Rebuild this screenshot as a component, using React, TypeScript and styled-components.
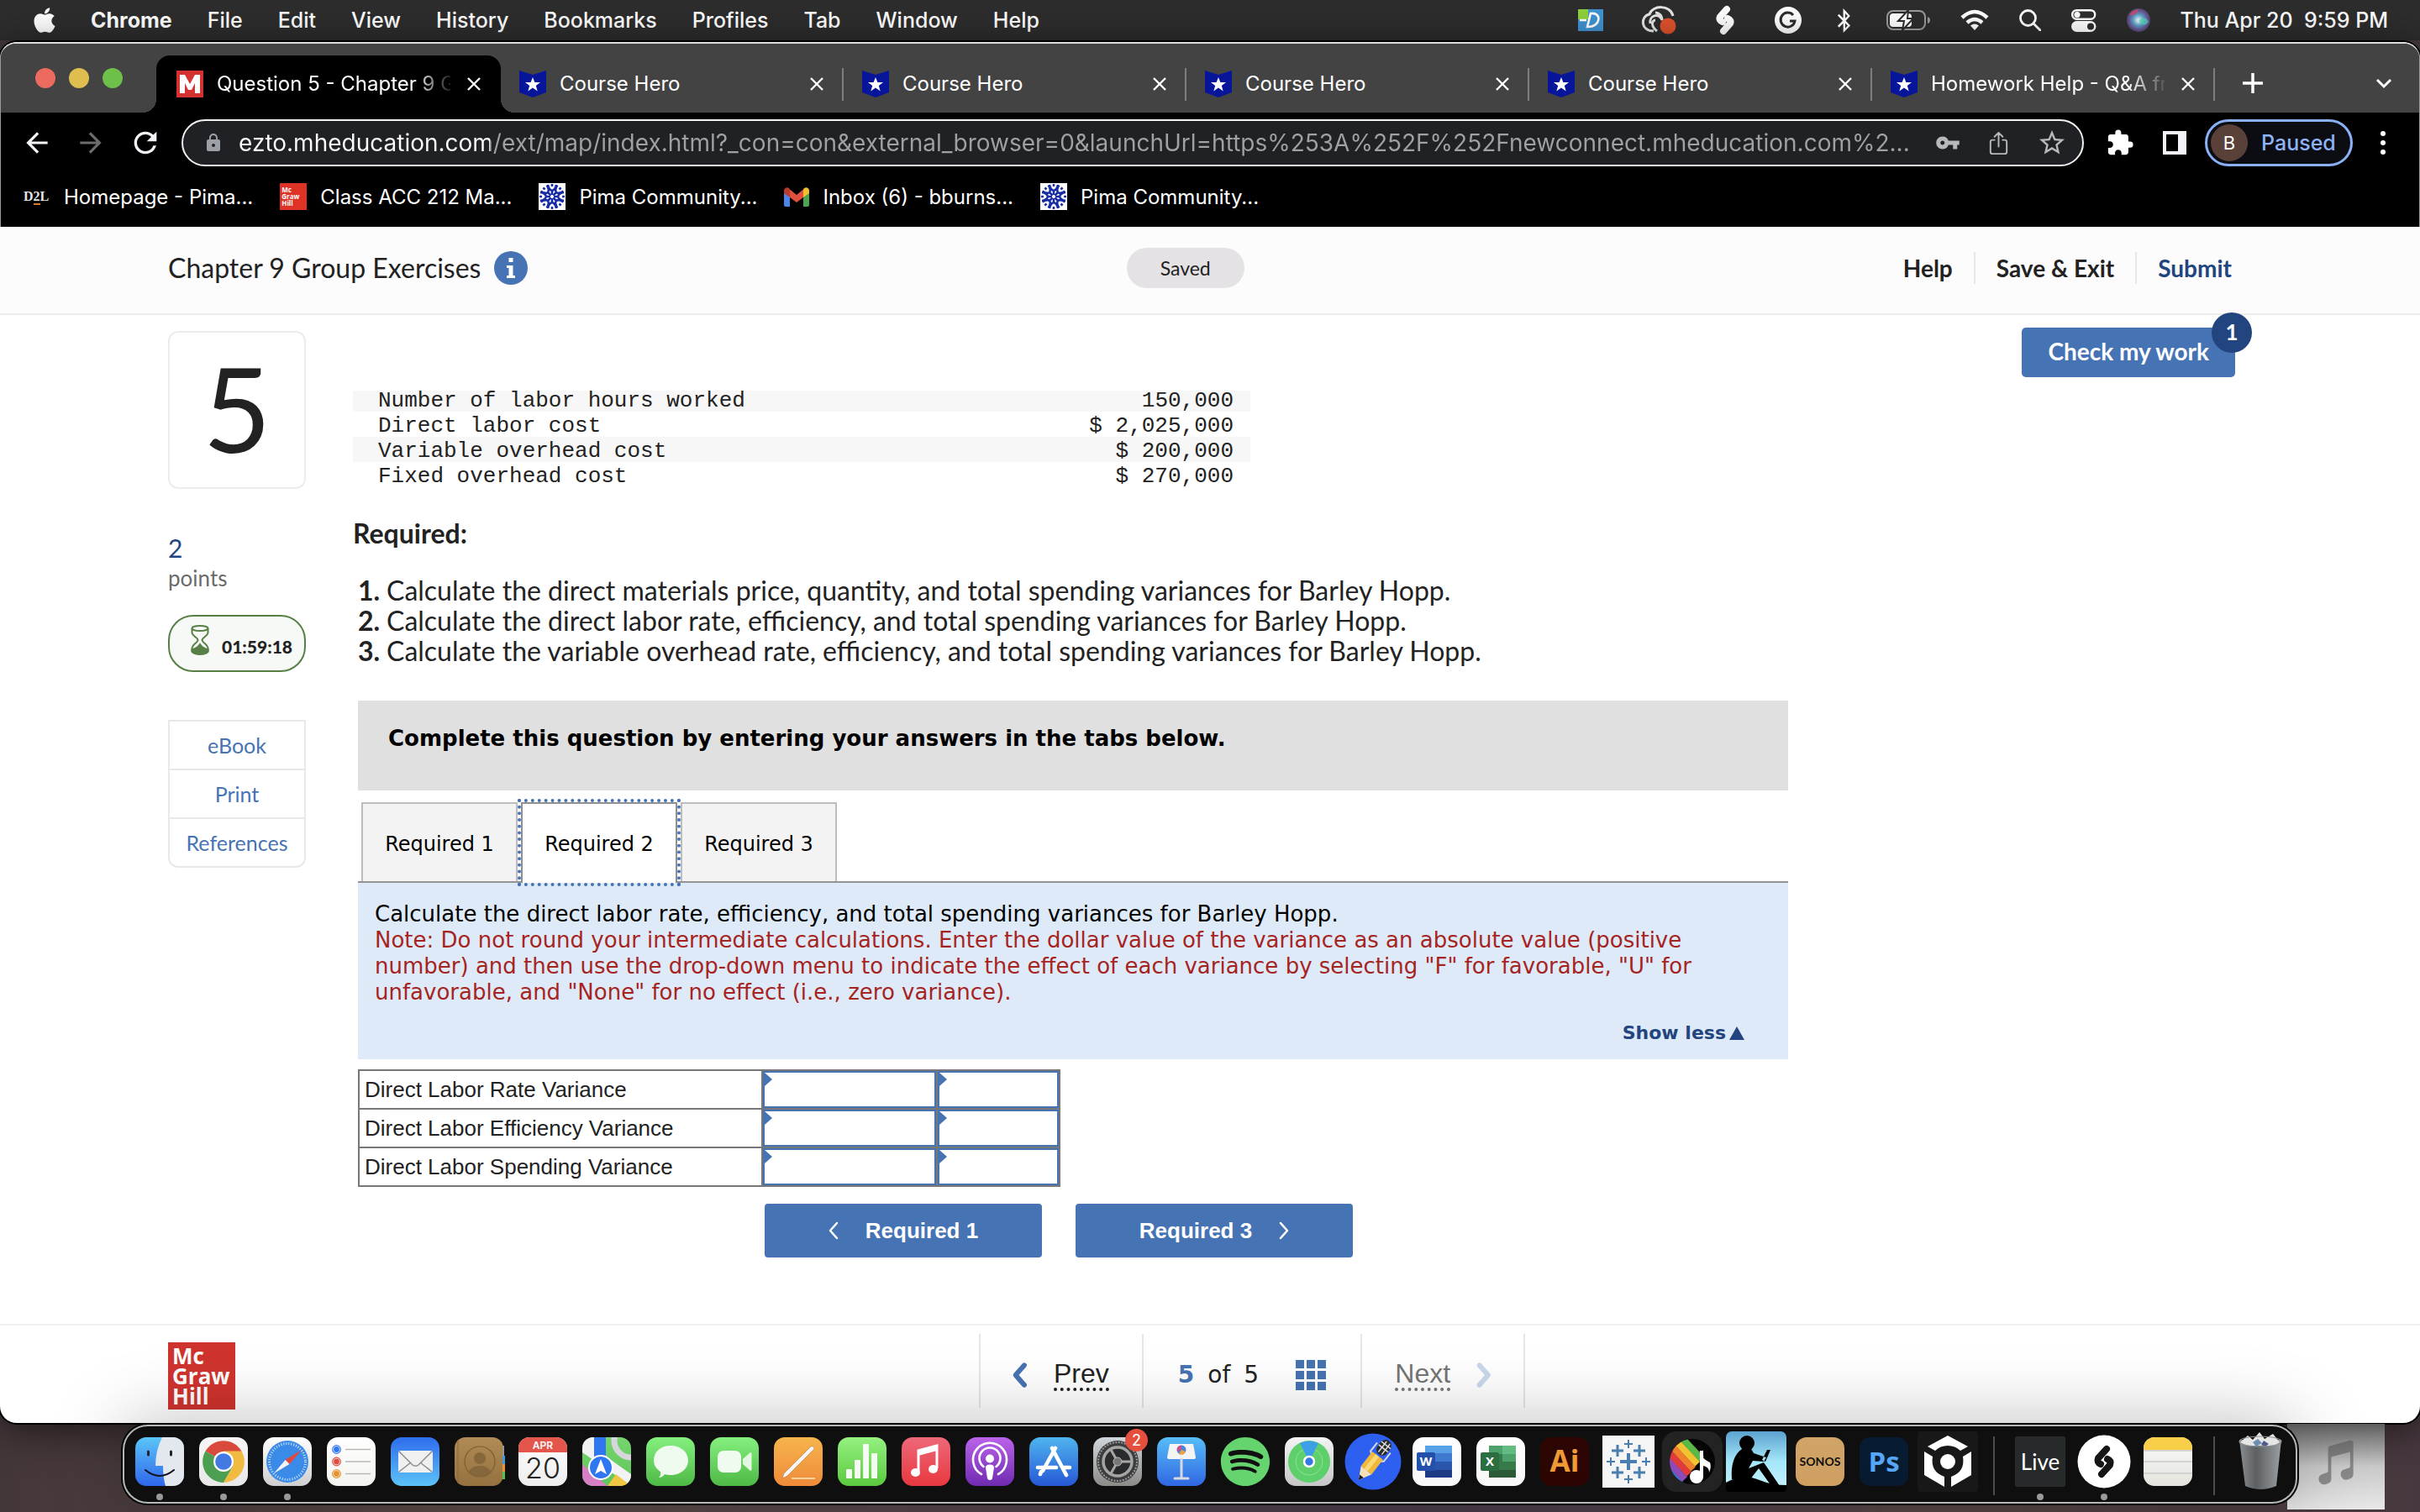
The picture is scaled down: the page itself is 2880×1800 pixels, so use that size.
import React from 'react';
import styled, { createGlobalStyle, css } from 'styled-components';
import { FaApple, FaBluetoothB, FaSpotify } from 'react-icons/fa';
import { MdArrowBack, MdArrowForward, MdRefresh, MdLock, MdVpnKey, MdStarBorder, MdExtension } from 'react-icons/md';
import { IoShareOutline, IoMusicalNotes } from 'react-icons/io5';

const ui = `Inter, "Liberation Sans", sans-serif`;
const brand = `Lato, "Open Sans", sans-serif`;
const verdana = `"DejaVu Sans", sans-serif`;
const arial = `"Liberation Sans", Arial, sans-serif`;
const blue = '#4673b3';
const navy = '#23457f';
const ink = '#222222';

const GlobalStyle = createGlobalStyle`
  *, *::before, *::after { box-sizing: border-box; }
  body { margin: 0; background: #44373a; }
  button { font: inherit; color: inherit; background: none; border: 0; padding: 0; margin: 0; cursor: pointer; }
  a { color: inherit; text-decoration: none; }
  svg { display: block; flex: none; }
`;

const Desktop = styled.div`
  position: relative;
  min-height: 100vh;
  display: flex;
  flex-direction: column;
  overflow: hidden;
  background: linear-gradient(90deg, #44373a 0%, #5d4b48 20%, #4a3d4c 60%, #584745 80%, #47383f 100%);
`;

/* ---------- system menu bar ---------- */

const MenuBar = styled.header`
  display: flex;
  justify-content: space-between;
  align-items: center;
  height: 48px;
  padding: 0 38px 0 40px;
  background: #2d2d2d;
  color: #fff;
  font: 400 25px/48px ${ui};
`;

const AppleMark = styled(FaApple)`
  width: 26px;
  height: 34px;
`;

const MenuList = styled.nav`
  display: flex;
  align-items: center;
  gap: 42px;
`;

const MenuItem = styled.button<{ $strong?: boolean }>`
  font-weight: ${(p) => (p.$strong ? 700 : 500)};
`;

const StatusList = styled.div`
  display: flex;
  align-items: center;
  gap: 36px;
`;

const StatusExtras = styled.div`
  display: flex;
  align-items: center;
  gap: 46px;
`;

const Clock = styled.time`
  white-space: pre;
  font-weight: 500;
`;

/* ---------- browser window ---------- */

const BrowserWindow = styled.div`
  flex: 1;
  display: flex;
  flex-direction: column;
  margin: 2px 0;
  border-radius: 20px;
  background: #fff;
  box-shadow: 0 0 0 2px #000, 0 8px 50px rgba(0, 0, 0, 0.6);
  overflow: hidden;
`;

const BrowserChrome = styled.div`
  background: #000;
  border: 1px solid #9a9a9a;
  border-top: 2px solid #dcdcdc;
  border-bottom: 0;
  border-radius: 20px 20px 0 0;
  color: #fff;
  height: 220px;
  font-family: ${ui};
`;

const TabStrip = styled.div`
  display: flex;
  height: 82px;
  padding-left: 41px;
  background: #434343;
  border-radius: 18px 18px 0 0;
`;

const Lights = styled.div`
  display: flex;
  gap: 16px;
  padding-top: 29px;
  width: 144px;
`;

const Light = styled.button<{ $color: string }>`
  width: 24px;
  height: 24px;
  border-radius: 50%;
  background: ${(p) => p.$color};
`;

const BrowserTab = styled.div<{ $active?: boolean }>`
  position: relative;
  display: flex;
  align-items: center;
  gap: 16px;
  width: ${(p) => (p.$active ? 410 : 408)}px;
  height: 68px;
  margin-top: 14px;
  padding: 0 20px 0 ${(p) => (p.$active ? 24 : 22)}px;
  font-size: 24px;
  font-weight: 400;
  ${(p) =>
    p.$active
      ? css`
          background: #000;
          border-radius: 16px 16px 0 0;
          &::before,
          &::after {
            content: '';
            position: absolute;
            bottom: 0;
            width: 16px;
            height: 16px;
          }
          &::before {
            right: 100%;
            background: radial-gradient(circle at 0 0, transparent 16px, #000 16px);
          }
          &::after {
            left: 100%;
            background: radial-gradient(circle at 100% 0, transparent 16px, #000 16px);
          }
        `
      : css`
          &::after {
            content: '';
            position: absolute;
            right: 0;
            top: 15px;
            width: 2px;
            height: 39px;
            background: #7d7d7d;
          }
        `}
`;

const TabTitle = styled.span<{ $fade?: boolean }>`
  flex: 1;
  min-width: 0;
  overflow: hidden;
  white-space: nowrap;
  line-height: 32px;
  ${(p) => p.$fade && css`mask-image: linear-gradient(90deg, #000 84%, transparent 102%);`}
`;

const TabClose = styled.button`
  width: 24px;
  height: 24px;
  display: grid;
  place-items: center;
`;

const NewTab = styled.button`
  margin: 33px 0 0 32px;
  height: 28px;
`;

const TabSearch = styled.button`
  margin: 33px 32px 0 auto;
  height: 28px;
`;

const Toolbar = styled.div`
  display: flex;
  align-items: center;
  height: 72px;
  padding: 0 29px 0 24px;
`;

const NavButtons = styled.div`
  display: flex;
  gap: 26px;
  width: 191px;
`;

const NavButton = styled.button<{ $dim?: boolean }>`
  color: ${(p) => (p.$dim ? '#6c6c6c' : '#f2f4f7')};
`;

const Omnibox = styled.div`
  flex: 1;
  display: flex;
  align-items: center;
  height: 56px;
  padding: 0 18px 0 24px;
  border: 2px solid #f1f1f1;
  border-radius: 28px;
  background: #202124;
  color: #b6b8bb;
`;

const UrlInput = styled.input`
  flex: 1;
  min-width: 0;
  height: 44px;
  margin: 0 24px 0 18px;
  padding: 0;
  border: 0;
  outline: 0;
  font: 400 28px/44px ${ui};
  color: #9fa1a4;
  -webkit-text-fill-color: transparent;
  background: linear-gradient(90deg, #ffffff 299px, #9fa1a4 299px);
  background-clip: text;
  -webkit-background-clip: text;
`;

const OmniActions = styled.div`
  display: flex;
  align-items: center;
  gap: 30px;
`;

const BrowserActions = styled.div`
  display: flex;
  align-items: center;
  gap: 22px;
  margin-left: 26px;
`;

const ProfileChip = styled.button`
  display: flex;
  align-items: center;
  gap: 16px;
  width: 176px;
  height: 56px;
  padding: 0 4px;
  border: 3px solid #8ab0f5;
  border-radius: 28px;
  background: #0c0d13;
  color: #8fb3f7;
  font: 500 25px/44px ${ui};
`;

const Avatar = styled.span`
  width: 44px;
  height: 44px;
  border-radius: 50%;
  background: #59413a;
  color: #fff;
  text-align: center;
  font-size: 22px;
  font-weight: 400;
`;

const Bookmarks = styled.nav`
  display: flex;
  align-items: center;
  gap: 32px;
  height: 56px;
  padding-left: 27px;
  font-size: 24px;
  font-weight: 400;
`;

const Bookmark = styled.a`
  display: flex;
  align-items: center;
  gap: 16px;
`;

const SmallLogo = styled.span`
  display: flex;
  flex-direction: column;
  justify-content: center;
  width: 32px;
  height: 32px;
  padding-left: 2px;
  background: #de3226;
  color: #fff;
  font: 700 8px/8px "Open Sans", sans-serif;
`;

const D2L = styled.span`
  width: 32px;
  font: 700 16px/32px "Liberation Serif", serif;
  color: #e6e6e6;
  i {
    font-style: normal;
    border-bottom: 2px solid #d87a2b;
  }
`;

/* ---------- assignment page ---------- */

const PageHeader = styled.header`
  display: grid;
  grid-template-columns: 33fr auto 34fr;
  align-items: center;
  height: 105px;
  padding: 0 224px 6px 200px;
  background: #fcfcfc;
  border-bottom: 2px solid #ececec;
  color: ${ink};
  font-family: ${brand};
`;

const Title = styled.h1`
  display: flex;
  align-items: center;
  gap: 16px;
  margin: 0;
  font-size: 32px;
  line-height: 40px;
  font-weight: 400;
`;

const SavedPill = styled.span`
  width: 140px;
  border-radius: 24px;
  background: #e4e2e5;
  text-align: center;
  font-size: 23px;
  line-height: 48px;
`;

const HeaderActions = styled.div`
  display: flex;
  justify-content: flex-end;
  font-size: 28px;
  line-height: 38px;
  font-weight: 700;
`;

const HeaderAction = styled.button<{ $primary?: boolean }>`
  padding-left: 25px;
  color: ${(p) => (p.$primary ? navy : ink)};
  & + & {
    margin-left: 25px;
    border-left: 2px solid #e8e8e8;
  }
`;

const Main = styled.main`
  flex: 1;
  display: flex;
  align-items: flex-start;
  gap: 56px;
  padding: 19px 220px 24px 200px;
  color: ${ink};
  font-family: ${brand};
`;

const Sidebar = styled.aside`
  width: 164px;
  flex: none;
`;

const QuestionNumber = styled.div`
  height: 188px;
  border: 2px solid #ececec;
  border-radius: 12px;
  text-align: center;
  font-size: 140px;
  line-height: 178px;
`;

const Points = styled.p`
  margin: 52px 0 26px;
  font-size: 26px;
  line-height: 36px;
  color: #6b6b6b;
  b {
    display: block;
    font-size: 30px;
    line-height: 36px;
    font-weight: 400;
    color: ${navy};
  }
`;

const Timer = styled.div`
  display: flex;
  justify-content: space-between;
  height: 68px;
  padding: 10px 14px 0 25px;
  border: 2px solid #568046;
  border-radius: 30px;
  background: #f7f9f6;
  font-size: 21px;
  font-weight: 900;
  line-height: 52px;
`;

const SideLinks = styled.nav`
  display: flex;
  flex-direction: column;
  margin-top: 57px;
  border: 2px solid #e8e8e8;
  border-radius: 0 0 12px 12px;
  color: ${blue};
  text-align: center;
  font-size: 25px;
  line-height: 56px;
  a + a {
    border-top: 2px solid #e8e8e8;
  }
`;

const Content = styled.section`
  flex: 0 1 1708px;
  padding-top: 66px;
`;

const Facts = styled.table`
  width: 1068px;
  border-collapse: collapse;
  font: 400 26px/26px "Liberation Mono", monospace;
  td {
    padding: 4px 20px 0 30px;
  }
  td + td {
    text-align: right;
  }
  tr:nth-child(odd) {
    background: #f7f7f7;
  }
  tr:first-child {
    background: linear-gradient(transparent 5px, #f7f7f7 5px);
  }
`;

const Required = styled.h2`
  margin: 35px 0 30px;
  font-size: 32px;
  line-height: 40px;
  font-weight: 700;
`;

const Steps = styled.ol`
  margin: 0 0 41px;
  padding-left: 40px;
  font-size: 32px;
  line-height: 36px;
  li::marker {
    font-weight: 700;
  }
`;

const Worksheet = styled.div`
  margin-left: 6px;
`;

const Banner = styled.p`
  margin: 0 0 14px;
  padding: 27px 36px 44px;
  background: #e0e0e0;
  color: #000;
  font: 700 26px/36px ${verdana};
`;

const Tabs = styled.div`
  display: flex;
  gap: 4px;
  padding-left: 4px;
`;

const Tab = styled.button<{ $active?: boolean }>`
  width: 186px;
  height: 94px;
  padding-top: 4px;
  border: 2px solid ${(p) => (p.$active ? '#8f8f8f' : '#bdbdbd')};
  border-bottom: 0;
  background: ${(p) => (p.$active ? '#fff' : '#f3f3f3')};
  color: #000;
  font: 400 24px/30px ${verdana};
  ${(p) =>
    p.$active &&
    css`
      height: 96px;
      margin-bottom: -2px;
      padding-top: 2px;
      outline: 4px dotted ${blue};
      position: relative;
    `}
`;

const Instructions = styled.div`
  padding: 22px 52px 16px 20px;
  border-top: 2px solid #949494;
  background: #deeaf8;
  color: #000;
  font: 400 26px/31px ${verdana};
  p {
    margin: 0;
  }
`;

const Note = styled.span`
  color: #a6241f;
`;

const ShowLess = styled.button`
  display: flex;
  align-items: center;
  gap: 4px;
  margin: 18px 0 0 auto;
  color: ${navy};
  font: 700 22px/30px ${verdana};
`;

const AnswerTable = styled.table`
  margin: 12px 0 20px;
  border-collapse: collapse;
  font: 400 26px/30px ${arial};
  th,
  td {
    height: 46px;
    padding: 0;
    border: 2px solid #777;
  }
  th {
    width: 480px;
    padding-left: 6px;
    text-align: left;
    font-weight: 400;
  }
`;

const AnswerCell = styled.td<{ $width: number }>`
  position: relative;
  width: ${(p) => p.$width}px;
  &::before {
    content: '';
    position: absolute;
    left: 2px;
    top: 2px;
    width: 9px;
    height: 16px;
    background: ${blue};
    clip-path: polygon(0 0, 100% 50%, 0 100%);
    pointer-events: none;
  }
`;

const field = css`
  display: block;
  width: 100%;
  height: 44px;
  margin: 0;
  padding: 0 14px;
  border: 2px solid ${blue};
  border-radius: 0;
  background: #fff;
  appearance: none;
  outline: 0;
  font: 400 26px/30px ${arial};
`;
const AmountInput = styled.input`
  ${field}
`;
const EffectSelect = styled.select`
  ${field}
`;

const StepButtons = styled.div`
  display: flex;
  gap: 40px;
  padding-left: 484px;
`;

const StepButton = styled.button`
  display: flex;
  align-items: center;
  justify-content: center;
  gap: 32px;
  width: 330px;
  height: 64px;
  border-radius: 4px;
  background: ${blue};
  color: #fff;
  font: 700 26px/30px ${arial};
`;

const CheckWrap = styled.div`
  position: relative;
  margin: -4px 0 0 auto;
`;

const CheckButton = styled.button`
  padding: 0 31px 3px;
  border-radius: 5px;
  background: ${blue};
  color: #fff;
  font: 700 28px/56px ${brand};
`;

const CheckBadge = styled.span`
  position: absolute;
  right: -20px;
  top: -18px;
  width: 48px;
  height: 48px;
  border-radius: 50%;
  background: ${navy};
  color: #fff;
  text-align: center;
  font: 700 26px/46px ${brand};
`;

const PageFooter = styled.footer`
  display: grid;
  grid-template-columns: 1fr auto 1fr;
  height: 118px;
  padding: 10px 100px 0 200px;
  border-top: 2px solid #f0f0f0;
  font: 400 32px/88px ${arial};
  color: ${ink};
`;

const McGrawLogo = styled.div`
  width: 80px;
  height: 80px;
  margin-top: 10px;
  padding: 4px 0 0 5px;
  background: #d0332e;
  color: #fff;
  font: 700 26px/24px "Open Sans", sans-serif;
`;

const Pager = styled.nav`
  display: flex;
  height: 88px;
  border-left: 2px solid #e6e6e6;
`;

const PagerCell = styled.div<{ $wide?: boolean }>`
  display: flex;
  align-items: center;
  justify-content: center;
  gap: 44px;
  width: ${(p) => (p.$wide ? 260 : 194)}px;
  padding-top: 10px;
  border-right: 2px solid #e6e6e6;
`;

const PagerLink = styled.button<{ $off?: boolean }>`
  display: flex;
  align-items: center;
  gap: 32px;
  color: ${(p) => (p.$off ? '#757575' : ink)};
  span {
    line-height: 34px;
    border-bottom: 4px dotted currentColor;
  }
`;

const PageCount = styled.span`
  display: flex;
  gap: 16px;
  font: 400 28px/40px ${verdana};
  b {
    color: ${blue};
  }
`;

/* ---------- dock ---------- */

const DockBar = styled.nav`
  position: relative;
  z-index: 1;
  display: flex;
  align-self: center;
  height: 94px;
  margin-bottom: 10px;
  padding: 0 4px;
  border: 2px solid #b4b8b6;
  border-radius: 30px;
  background: #0f0f0f;
  box-shadow: 0 0 0 2px #050505, 0 0 90px rgba(0, 0, 0, 0.28);
`;

const DockSlot = styled.button<{ $running?: boolean }>`
  position: relative;
  display: flex;
  flex-direction: column;
  align-items: center;
  width: 76px;
  padding-top: 13px;
  svg {
    overflow: visible;
  }
  &::after {
    content: '';
    width: 8px;
    height: 8px;
    margin-top: 9px;
    border-radius: 50%;
    background: ${(p) => (p.$running ? '#9a9a9a' : 'transparent')};
  }
`;

const DockBadge = styled.span`
  position: absolute;
  right: 2px;
  top: 3px;
  width: 27px;
  height: 27px;
  border-radius: 50%;
  background: #e5503e;
  color: #fff;
  text-align: center;
  font: 400 18px/27px ${ui};
`;

const DockRule = styled.span`
  width: 2px;
  height: 70px;
  margin: 12px 16px 0;
  background: #4c4c4c;
`;

const DesktopFile = styled.div`
  position: absolute;
  right: 42px;
  bottom: 3px;
  display: grid;
  place-items: center;
  width: 116px;
  height: 102px;
  padding-bottom: 10px;
  background: linear-gradient(#5e5e5e, #c9c9c9 50%, #e8e8e8);
  color: rgba(90, 90, 90, 0.6);
`;

/* ---------- drawings ---------- */

const Cross = ({ size = 18 }: { size?: number }) => (
  <svg width={size} height={size} viewBox="0 0 18 18" fill="none" stroke="#fff" strokeWidth="2.4">
    <path d="M2 2 16 16M16 2 2 16" />
  </svg>
);

const Chevron = ({ dir, color, w = 4, size = 20 }: { dir: 'l' | 'r'; color: string; w?: number; size?: number }) => (
  <svg width={size * 0.6} height={size} viewBox="0 0 12 20" fill="none" stroke={color} strokeWidth={w} strokeLinecap="round" strokeLinejoin="round" overflow="visible">
    <path d={dir === 'l' ? 'M10 1 2 10 10 19' : 'M2 1 10 10 2 19'} />
  </svg>
);

const HeroIcon = () => (
  <svg width="32" height="32" viewBox="0 0 32 32">
    <path d="M0 0 16 5 32 0V26L16 32 0 26Z" fill="#07159a" />
    <path d="m16 8 2.4 6H25l-5.2 4 1.9 6.4L16 20.600l-5.700 3.800L12.200 18 7 14h6.600Z" fill="#fff" />
  </svg>
);

const MIcon = () => (
  <svg width="32" height="32" viewBox="0 0 32 32">
    <rect width="32" height="32" fill="#d6322f" />
    <path d="M4 27V5h6l6 11 6-11h6v22h-6V15l-4 8h-4l-4-8v12Z" fill="#fff" />
  </svg>
);

const PimaIcon = () => (
  <svg width="32" height="32" viewBox="0 0 32 32" stroke="#182da3" strokeWidth="2.6" fill="none">
    <rect width="32" height="32" fill="#fff" stroke="none" />
    {[0, 45, 90, 135, 180, 225, 270, 315].map((a) => (
      <g key={a} transform={`rotate(${a} 16 16)`}>
        <path d="M16 14V8M11 2q1 6 5 7 4-1 5-7" />
        <path d="M16 1v3" />
      </g>
    ))}
  </svg>
);

const GmailIcon = () => (
  <svg width="30" height="23" viewBox="0 0 30 23">
    <path d="M0 4v17a2 2 0 0 0 2 2h5V9Z" fill="#4a85ec" />
    <path d="M30 4v17a2 2 0 0 1-2 2h-5V9Z" fill="#4aa653" />
    <path d="M23 3v9l7-5V4c0-3.500-4-5-6.500-2.500Z" fill="#f3bd2e" />
    <path d="M7 3v9L0 7V4C0 .5 4-1 6.500 1.500Z" fill="#b93a2f" />
    <path d="M7 2.500 15 9l8-6.500V12l-8 6-8-6Z" fill="#e0503f" />
  </svg>
);

const InfoIcon = () => (
  <svg width="40" height="40" viewBox="0 0 40 40">
    <circle cx="20" cy="20" r="20" fill={blue} />
    <path d="M17.500 8h5v5h-5ZM15 17h7.500v12H25v3H15v-3h2.500v-9H15Z" fill="#fff" />
  </svg>
);

const Hourglass = () => (
  <svg width="22" height="36" viewBox="0 0 22 36" fill="none" stroke="#568046" strokeWidth="2">
    <ellipse cx="11" cy="4" rx="9.500" ry="3" />
    <path d="M1.500 4v5c0 4 7 6 7 9s-7 5-7 10v4M20.500 4v5c0 4-7 6-7 9s7 5 7 10v4" />
    <path d="M1.500 29q6-1 9.500-6 3.500 5 9.500 6v3c-3 4-16 4-19 0Z" fill="#568046" />
  </svg>
);

const ExtraIcons = () => (
  <StatusExtras>
    <svg width="30" height="26" viewBox="0 0 30 26">
      <rect width="30" height="26" fill="#3f93d2" />
      <path d="M0 0h12v12H0Z" fill="#8fd03c" />
      <path d="M11 21 15 5c14-2 12 17-4 16ZM2 13h8" fill="none" stroke="#fff" strokeWidth="2.600" />
    </svg>
    <svg width="40" height="34" viewBox="0 0 40 34" fill="none" stroke="#e4e4e4" strokeWidth="3" overflow="visible">
      <path d="M14 30C-2 30-2 12 9 10 12-1 34-2 37 12M10 21c-2-9 10-14 14-4M18 30C10 24 12 17 16 17M24 17c0-6-4-9-8-9" />
      <circle cx="31" cy="24" r="9.500" fill="#e0522d" stroke="none" />
    </svg>
    <svg width="26" height="36" viewBox="0 0 26 36" fill="none" stroke="#fff" strokeWidth="8" strokeLinecap="round">
      <path d="M15 5 7 14q-2 4 3 6M11 31l8-9q2-4-3-6" />
    </svg>
    <svg width="32" height="32" viewBox="0 0 32 32">
      <circle cx="16" cy="16" r="16" fill="#fff" />
      <path d="M22 10a8.500 8.500 0 1 0 2 7h-6" fill="none" stroke="#2d2d2d" strokeWidth="3" />
    </svg>
  </StatusExtras>
);

const StatusIcons = () => (
  <>
    <FaBluetoothB size={29} />
    <svg width="52" height="26" viewBox="0 0 52 26">
      <rect x="1" y="2" width="45" height="22" rx="7" fill="none" stroke="#9b9b9b" strokeWidth="2" />
      <path d="M49 9q3 1 3 4t-3 4Z" fill="#9b9b9b" />
      <rect x="4" y="5" width="26" height="16" rx="4" fill="#fff" />
      <path d="M26 1 14 14h7l-2 11 13-14h-7Z" fill="#fff" stroke="#2d2d2d" strokeWidth="2" />
    </svg>
    <svg width="34" height="26" viewBox="0 0 34 26" fill="none" stroke="#fff" strokeWidth="4.500">
      <path d="M2 10q15-14 30 0M8 16q9-8 18 0" />
      <path d="m17 25-5-5.500q5-4 10 0Z" fill="#fff" stroke="none" />
    </svg>
    <svg width="26" height="26" viewBox="0 0 26 26" fill="none" stroke="#fff" strokeWidth="2.800">
      <circle cx="10.500" cy="10.500" r="9" />
      <path d="m17 17 8 8" strokeLinecap="round" />
    </svg>
    <svg width="30" height="27" viewBox="0 0 30 27">
      <rect x="1.200" y="1.200" width="27" height="10.500" rx="5.200" fill="none" stroke="#fff" strokeWidth="2.400" />
      <circle cx="7" cy="6.500" r="3.600" fill="#fff" />
      <rect y="14" width="29.500" height="13" rx="6.500" fill="#fff" />
      <circle cx="23" cy="20.500" r="4" fill="#2d2d2d" />
    </svg>
    <svg width="28" height="28" viewBox="0 0 28 28">
      <defs>
        <radialGradient id="siri">
          <stop offset="0" stopColor="#fff" />
          <stop offset=".45" stopColor="#5aa7c9" />
          <stop offset=".8" stopColor="#6a5596" />
          <stop offset="1" stopColor="#4a4a6c" />
        </radialGradient>
      </defs>
      <circle cx="14" cy="14" r="14" fill="url(#siri)" />
      <path d="M3 8a13 13 0 0 1 11-7q-2 8-11 7Z" fill="#d0476b" opacity=".8" />
      <path d="M14 14q9-6 12 2-6 8-12-2Z" fill="#54d6b6" opacity=".7" />
    </svg>
  </>
);

const Grad = ({ id, stops }: { id: string; stops: string[] }) => (
  <linearGradient id={id} x1="0" y1="0" x2="0" y2="1">
    {stops.map((c, i) => (
      <stop key={c} offset={i / (stops.length - 1)} stopColor={c} />
    ))}
  </linearGradient>
);

const Art = ({ id, stops, children }: { id: string; stops?: string[]; children?: React.ReactNode }) => (
  <svg width="58" height="58" viewBox="0 0 58 58">
    {stops && (
      <>
        <defs>
          <Grad id={id} stops={stops} />
          <clipPath id={`${id}-clip`}>
            <rect width="58" height="58" rx="13" />
          </clipPath>
        </defs>
        <rect width="58" height="58" rx="13" fill={`url(#${id})`} />
      </>
    )}
    {children}
  </svg>
);

const white = ['#ffffff', '#ededed'];

type App = { name: string; art: React.ReactNode; running?: boolean; badge?: string };

const apps: App[] = [
  {
    name: 'Finder',
    running: true,
    art: (
      <Art id="finder" stops={['#5ac6f7', '#2f66ec']}>
        <g clipPath="url(#finder-clip)">
          <path d="M32 0q-8 16-8 34h9q0 14 3 24h22V0Z" fill="#e3e7ee" />
        </g>
        <path d="M15.500 17v4M42.500 17v4" stroke="#223" strokeWidth="3" strokeLinecap="round" />
        <path d="M12 39q17 14 34 0" fill="none" stroke="#112" strokeWidth="2" strokeLinecap="round" />
      </Art>
    ),
  },
  {
    name: 'Chrome',
    running: true,
    art: (
      <Art id="chrome" stops={['#f6f6f6', '#e8e8e8']}>
        <path d="M29 29 7.500 16.500A25 25 0 0 1 50.500 16.500Z" fill="#d94a3d" />
        <path d="M29 29 7.500 16.500A25 25 0 0 0 29 54L40 35Z" fill="#4c9f50" />
        <path d="M29 54A25 25 0 0 0 50.500 16.500H29L29 29 40 35Z" fill="#f1bb42" />
        <circle cx="29" cy="29" r="12" fill="#fff" />
        <circle cx="29" cy="29" r="9.800" fill="#4479e3" />
      </Art>
    ),
  },
  {
    name: 'Safari',
    running: true,
    art: (
      <Art id="safari" stops={['#ffffff', '#cfcfcf']}>
        <circle cx="29" cy="29" r="25" fill="#3a8be8" />
        <circle cx="29" cy="29" r="21.500" fill="none" stroke="#cfe4fa" strokeWidth="3" strokeDasharray="1 2" />
        <path d="M46 15 31.500 32 26.500 27Z" fill="#e3483b" />
        <path d="M13 43 26.500 27 31.500 32Z" fill="#f4f4f4" />
      </Art>
    ),
  },
  {
    name: 'Reminders',
    art: (
      <Art id="rem" stops={['#ffffff', '#f3f3ef']}>
        {['#3377f0', '#e04b3f', '#e39230'].map((c, i) => (
          <g key={c} transform={`translate(0 ${14.500 + i * 14.500})`}>
            <circle cx="11.500" r="4.800" fill="none" stroke={c} strokeWidth="1.200" />
            <circle cx="11.500" r="3.400" fill={c} />
            <path d="M22 0h30" stroke="#b5b5b5" strokeWidth="1.400" />
          </g>
        ))}
      </Art>
    ),
  },
  {
    name: 'Mail',
    art: (
      <Art id="mail" stops={['#2f6cec', '#5cc3f8']}>
        <rect x="9" y="16" width="41" height="26" rx="3" fill="#f0f0f0" />
        <path d="m10 17 16 16q3.500 2.500 7 0l16-16M10 41l14-11M49 41 35 30" fill="none" stroke="#8c8c8c" strokeWidth="1.500" />
      </Art>
    ),
  },
  {
    name: 'Contacts',
    art: (
      <Art id="contacts" stops={['#b08b55', '#94713f']}>
        <path d="M57 10h2v12h-2Z" fill="#999" />
        <path d="M57 22h3v10h-3Z" fill="#3f9be0" />
        <path d="M57 32h3v9h-3Z" fill="#f0912d" />
        <path d="M57 41h3v9h-3Z" fill="#55c24e" />
        <path d="M4 3v52" stroke="#87683c" />
        <g fill="#86673b">
          <circle cx="30" cy="29" r="18" fill="none" stroke="#7d5f35" strokeWidth="1.200" />
          <circle cx="30" cy="25" r="7" />
          <path d="M17 41q3-7 13-7t13 7q-13 11-26 0Z" />
        </g>
      </Art>
    ),
  },
  {
    name: 'Calendar',
    art: (
      <Art id="cal" stops={white}>
        <path d="M0 18V13A13 13 0 0 1 13 0h32a13 13 0 0 1 13 13v5Z" fill="#e4564b" />
        <text x="29" y="14" textAnchor="middle" fill="#fff" fontFamily="Inter, sans-serif" fontWeight="600" fontSize="12">APR</text>
        <text x="29" y="49" textAnchor="middle" fill="#222" fontFamily="Inter, sans-serif" fontWeight="300" fontSize="34">20</text>
      </Art>
    ),
  },
  {
    name: 'Maps',
    art: (
      <Art id="maps" stops={['#76d56e', '#5fc65b']}>
        <g clipPath="url(#maps-clip)">
          <path d="M0 32 30 58H0Z" fill="#d77fc4" />
          <path d="M0 18 58 58V44L16 14V0H0Z" fill="#f2f2f5" />
          <path d="M30 58 40 44 58 58Z" fill="#f2c643" />
          <circle cx="58" cy="4" r="20" fill="none" stroke="#d6d6dc" strokeWidth="7" />
          <path d="M14 0h14v34H14Z" fill="#2f77f0" />
        </g>
        <circle cx="22" cy="36" r="14" fill="#2f77f0" stroke="#fff" strokeWidth="2" />
        <path d="m22 26 7 18-7-4-7 4Z" fill="#fff" />
      </Art>
    ),
  },
  {
    name: 'Messages',
    art: (
      <Art id="msg" stops={['#86f07f', '#4fb946']}>
        <path d="M29 10c12 0 21 7.500 21 17.500S41 45 29 45q-4 0-7-1-3 4-7 4 3-3 2-7-8-5-8-13.500C9 17.500 17 10 29 10Z" fill="#eefbee" />
      </Art>
    ),
  },
  {
    name: 'FaceTime',
    art: (
      <Art id="ft" stops={['#86f07f', '#4fb946']}>
        <rect x="9" y="16" width="28" height="26" rx="7" fill="#eefbee" />
        <path d="M39 26 48 18q1.500 0 1.500 2v18q0 2-1.500 2l-9-8Z" fill="#e2f7e1" />
      </Art>
    ),
  },
  {
    name: 'Pages',
    art: (
      <Art id="pages" stops={['#f6b44c', '#ef8b39']}>
        <path d="M44 11q4-1 4 3L16 46l-6 3 2-6Z" fill="#f6f6f6" stroke="#b87130" strokeWidth=".6" />
        <path d="M21 49h28" stroke="#fbd2a0" strokeWidth="2" />
      </Art>
    ),
  },
  {
    name: 'Numbers',
    art: (
      <Art id="numbers" stops={['#95f180', '#5bc93f']}>
        <g fill="#f4fbf2">
          <rect x="10" y="38" width="7" height="11" rx="1" />
          <rect x="20" y="27" width="7" height="22" rx="1" />
          <rect x="30" y="8" width="7" height="41" rx="1" />
          <rect x="40" y="19" width="7" height="30" rx="1" />
        </g>
      </Art>
    ),
  },
  {
    name: 'Music',
    art: (
      <Art id="music" stops={['#ee6879', '#e8383f']}>
        <path d="M20 41V16l22-6v27" fill="none" stroke="#fff" strokeWidth="3" />
        <path d="M20 15 42 9.500V16L20 22Z" fill="#fff" />
        <ellipse cx="16.500" cy="42" rx="5.500" ry="5" fill="#fff" />
        <ellipse cx="37.500" cy="38" rx="5.500" ry="5" fill="#fff" />
      </Art>
    ),
  },
  {
    name: 'Podcasts',
    art: (
      <Art id="pod" stops={['#bb63ea', '#6f2bb0']}>
        <g fill="none" stroke="#fff" strokeWidth="2.600" strokeLinecap="round">
          <path d="M19 44a20 20 0 1 1 20 0" />
          <path d="M21.500 35a12.500 12.500 0 1 1 15 0" />
        </g>
        <circle cx="29" cy="25.500" r="5" fill="#fff" />
        <path d="M24 36q0-3.500 5-3.500t5 3.500l-2 13q-.5 2-3 2t-3-2Z" fill="#fff" />
      </Art>
    ),
  },
  {
    name: 'App Store',
    art: (
      <Art id="store" stops={['#4fb4ee', '#2658d6']}>
        <path d="M10 36h22M40 36h8M31 13 16 40M27 13l17 32M14 41l-1 3" stroke="#fff" strokeWidth="4.600" strokeLinecap="round" />
      </Art>
    ),
  },
  {
    name: 'System Preferences',
    badge: '2',
    art: (
      <Art id="prefs" stops={['#cfd6dc', '#8b8b88']}>
        <circle cx="29" cy="29" r="25" fill="#3c3d3e" />
        <circle cx="29" cy="29" r="23" fill="none" stroke="#9a9a9a" strokeWidth="2" strokeDasharray="2 1.500" />
        <circle cx="29" cy="29" r="17" fill="#2a2b2c" stroke="#a5a5a5" strokeWidth="3.500" />
        <path d="M29 29 20 13M29 29h18M29 29 20 45" stroke="#a5a5a5" strokeWidth="3" />
        <circle cx="29" cy="29" r="5" fill="#777" stroke="#bbb" />
      </Art>
    ),
  },
  {
    name: 'Keynote',
    art: (
      <Art id="key" stops={['#57bdf7', '#3067e2']}>
        <path d="M15 8h28l3 16q0 2-2 2H14q-2 0-2-2Z" fill="#f4f4f4" />
        <circle cx="29" cy="15" r="5.500" fill="#4a86e0" />
        <path d="M29 15V9.500a5.500 5.500 0 0 0-5 7.500Z" fill="#d8498a" />
        <path d="M29 15 34 17a5.500 5.500 0 0 1-8 3Z" fill="#eda53a" />
        <path d="M29 26v22M21 49h16" stroke="#d6d9df" strokeWidth="3" strokeLinecap="round" />
      </Art>
    ),
  },
  {
    name: 'Spotify',
    art: (
      <Art id="spotify">
        <circle cx="29" cy="29" r="28" fill="#101010" />
        <FaSpotify x={-1} y={-1} size={60} color="#65d46e" />
      </Art>
    ),
  },
  {
    name: 'Find My',
    art: (
      <Art id="findmy" stops={['#f4f4f4', '#c6c6c6']}>
        <circle cx="29" cy="29" r="25" fill="#5dcf6b" />
        <circle cx="29" cy="29" r="16" fill="none" stroke="#8be592" />
        <path d="M29 29 18 7q11-5 22 0Z" fill="#3c9fe8" />
        <circle cx="29" cy="29" r="6" fill="#3478e5" stroke="#fff" strokeWidth="2.600" />
      </Art>
    ),
  },
  {
    name: 'Notability',
    art: (
      <Art id="nota">
        <circle cx="29" cy="29" r="33.500" fill="#2d5ff0" />
        <g transform="rotate(38 29 29)">
          <rect x="22" y="-2" width="14" height="20" rx="7" fill="#2b2b2b" />
          <path d="M22 4h14M22 9h14M27 0v16M32 0v16" stroke="#ddd" strokeWidth="1.500" />
          <path d="M19 8v13q10 8 20 0V8" fill="none" stroke="#d5d9e2" strokeWidth="2" />
          <path d="M21 20h16v22H21Z" fill="#f0b93c" />
          <path d="M26 20h5v22h-5Z" fill="#fad978" />
          <path d="M21 42h16l-8 15Z" fill="#f6dfbb" />
          <path d="M26 51h6l-3 6Z" fill="#1c1c1c" />
        </g>
      </Art>
    ),
  },
  {
    name: 'Word',
    art: (
      <Art id="word" stops={['#ffffff', '#f7f7f7']}>
        <path d="M15 10h32v9H15Z" fill="#59a1e6" />
        <path d="M15 19h32v10H15Z" fill="#3f78cf" />
        <path d="M15 29h32v10H15Z" fill="#2a55ac" />
        <path d="M15 39h32v9H15Z" fill="#1e3a85" />
        <rect x="5" y="18" width="22" height="22" rx="2" fill="#2350ab" />
        <text x="16" y="34" textAnchor="middle" fill="#fff" fontFamily="Open Sans, sans-serif" fontWeight="700" fontSize="15">W</text>
      </Art>
    ),
  },
  {
    name: 'Excel',
    art: (
      <Art id="excel" stops={['#ffffff', '#f7f7f7']}>
        <path d="M15 10h32v38H15Z" fill="#357a48" />
        <path d="M15 10h16v10H15Z" fill="#4ea16b" />
        <path d="M31 10h16v10H31Z" fill="#63bd83" />
        <path d="M31 20h16v9H31Z" fill="#4ea16b" />
        <path d="M15 39h32v9H15Z" fill="#2b5a36" />
        <rect x="5" y="18" width="22" height="22" rx="2" fill="#2b6e40" />
        <text x="16" y="34" textAnchor="middle" fill="#fff" fontFamily="Open Sans, sans-serif" fontWeight="700" fontSize="15">X</text>
      </Art>
    ),
  },
  {
    name: 'Illustrator',
    art: (
      <Art id="ai" stops={['#2d0603', '#2c0502']}>
        <text x="29" y="41" textAnchor="middle" fill="#f09a36" fontFamily="Open Sans, sans-serif" fontWeight="700" fontSize="35">Ai</text>
      </Art>
    ),
  },
  {
    name: 'Tableau',
    art: (
      <Art id="tableau">
        <rect x="-2" y="-2" width="62" height="62" fill="#f5f5f5" />
        <g stroke="#4a7db0" strokeWidth="3">
          <path d="M29 19v20M19 29h20" strokeWidth="4" />
          <path d="M16 9v14M9 16h14M42 9v14M35 16h14M16 35v14M9 42h14M42 35v14M35 42h14" />
          <path d="M29 3v10M24 8h10M29 45v10M24 50h10M8 24v10M3 29h10M50 24v10M45 29h10" strokeWidth="2" />
        </g>
      </Art>
    ),
  },
  {
    name: 'Capo',
    art: (
      <Art id="capo">
        <defs>
          <clipPath id="capo-disc">
            <circle cx="29" cy="29" r="27" />
          </clipPath>
        </defs>
        <rect x="-7" y="-7" width="72" height="72" rx="17" fill="#232323" />
        <circle cx="29" cy="29" r="27" fill="#050505" />
        <g clipPath="url(#capo-disc)">
          {['#58b947', '#f2c230', '#ef7f2d', '#e03a3a', '#8e4bb8', '#3f78d8'].map((c, i) => (
            <path key={c} d={`M${12 - i * 5} ${-4 + i * 6}l28 30`} stroke={c} strokeWidth="8" />
          ))}
        </g>
        <path d="M38 46V16q1 9 12 14 2 6-1 12 0-7-7-8" fill="#fff" />
        <path d="M38 16h4v32h-4Z" fill="#fff" />
        <circle cx="34" cy="47" r="8" fill="#fff" />
      </Art>
    ),
  },
  {
    name: 'Kindle',
    art: (
      <Art id="kindle">
        <defs>
          <Grad id="kindle-sky" stops={['#5ba3cf', '#a5e6fa', '#c9f4fd']} />
        </defs>
        <rect x="-7" y="-7" width="72" height="72" rx="7" fill="url(#kindle-sky)" />
        <path d="M-7 54q20-12 40-3 14 6 32 6v4q0 4-4 4H-3q-4 0-4-4Z" fill="#000" />
        <circle cx="18" cy="7" r="9" fill="#000" />
        <path d="M12 14Q-2 24 0 50h22l10-13 15 21h10L38 30 20 37l5-9 13 1 3-5-15-5-4-7ZM36 27 42 15h4l-6 14Z" fill="#000" />
      </Art>
    ),
  },
  {
    name: 'Sonos',
    art: (
      <Art id="sonos" stops={['#d0a468', '#cf9f60']}>
        <text x="29" y="33.500" textAnchor="middle" fill="#111" fontFamily="Lato, sans-serif" fontWeight="700" fontSize="14">SONOS</text>
      </Art>
    ),
  },
  {
    name: 'Photoshop',
    art: (
      <Art id="ps" stops={['#071c33', '#071a30']}>
        <text x="29" y="41" textAnchor="middle" fill="#56a6f8" fontFamily="Open Sans, sans-serif" fontWeight="700" fontSize="33">Ps</text>
      </Art>
    ),
  },
  {
    name: 'Hub',
    art: (
      <Art id="hub">
        <rect x="-7" y="-7" width="72" height="72" rx="4" fill="#181818" />
        <path d="M29-2 53 11 44 16q-6-6-15-6t-15 6L5 11Z" fill="#fff" />
        <path d="M1 17 11 23q-3 18 14 24v12L1 45ZM57 17 47 23q3 18-14 24v12L57 45Z" fill="#fff" />
        <circle cx="29" cy="29" r="9" fill="#fff" />
      </Art>
    ),
  },
];

const openApps: App[] = [
  {
    name: 'Live',
    running: true,
    art: (
      <Art id="live">
        <rect x="-1" y="-1" width="60" height="60" rx="2" fill="#272a2a" />
        <text x="29" y="39" textAnchor="middle" fill="#fff" fontFamily="Lato, sans-serif" fontWeight="400" fontSize="26">Live</text>
      </Art>
    ),
  },
  {
    name: 'Setlist',
    running: true,
    art: (
      <Art id="setlist">
        <circle cx="29" cy="29" r="31.500" fill="#fff" />
        <path d="M32 14 22 25q-2 5 3 7M26 44l10-11q2-5-3-7" fill="none" stroke="#161616" strokeWidth="8" strokeLinecap="round" />
      </Art>
    ),
  },
  {
    name: 'Notes',
    art: (
      <Art id="notes" stops={['#fbfbfb', '#e4e3dd']}>
        <path d="M0 15v-2A13 13 0 0 1 13 0h32a13 13 0 0 1 13 13v2Z" fill="#f9cf4a" />
        <path d="M0 16h58M0 29h58M0 43h58" stroke="#c9c9c9" strokeWidth="1.500" />
      </Art>
    ),
  },
];

const Trash = (
  <Art id="trash">
    <defs>
      <linearGradient id="trash-can">
        <stop offset="0" stopColor="#8b8e91" />
        <stop offset=".4" stopColor="#5c6063" />
        <stop offset="1" stopColor="#9b9fa2" />
      </linearGradient>
    </defs>
    <path d="M4 3 54 3 48 58Q29 66 11 58Z" fill="url(#trash-can)" />
    <path d="M5 6 14-2 20 3 28-6 34 2 44-4 52 6 46 10H12Z" fill="#e6e6e6" />
    <path d="m20 6 6-4 5 5-7 4Z" fill="#6b8fb0" />
    <path d="m33 4 6 4-4 3-5-2Z" fill="#4d5a8c" />
    <ellipse cx="29" cy="5" rx="25" ry="6" fill="none" stroke="#909396" strokeWidth="1.200" />
  </Art>
);

/* ---------- page data ---------- */

const menus = ['File', 'Edit', 'View', 'History', 'Bookmarks', 'Profiles', 'Tab', 'Window', 'Help'];
const facts = [
  ['Number of labor hours worked', '150,000'],
  ['Direct labor cost', '$ 2,025,000'],
  ['Variable overhead cost', '$ 200,000'],
  ['Fixed overhead cost', '$ 270,000'],
];
const answers = ['Direct Labor Rate Variance', 'Direct Labor Efficiency Variance', 'Direct Labor Spending Variance'];

const DockItem = ({ app }: { app: App }) => (
  <DockSlot $running={app.running} aria-label={app.name}>
    {app.art}
    {app.badge && <DockBadge>{app.badge}</DockBadge>}
  </DockSlot>
);

const HeroTab = ({ title, fade }: { title: string; fade?: boolean }) => (
  <BrowserTab>
    <HeroIcon />
    <TabTitle $fade={fade}>{title}</TabTitle>
    <TabClose aria-label="Close tab"><Cross /></TabClose>
  </BrowserTab>
);

export default function App() {
  return (
    <Desktop>
      <GlobalStyle />
      <MenuBar>
        <MenuList>
          <AppleMark />
          <MenuItem $strong>Chrome</MenuItem>
          {menus.map((m) => (
            <MenuItem key={m}>{m}</MenuItem>
          ))}
        </MenuList>
        <StatusList>
          <ExtraIcons />
          <StatusIcons />
          <Clock>Thu Apr 20  9:59 PM</Clock>
        </StatusList>
      </MenuBar>

      <BrowserWindow>
        <BrowserChrome>
          <TabStrip>
            <Lights>
              <Light $color="#ed6a5f" aria-label="Close" />
              <Light $color="#dfbe4f" aria-label="Minimize" />
              <Light $color="#6fc04b" aria-label="Zoom" />
            </Lights>
            <BrowserTab $active>
              <MIcon />
              <TabTitle $fade>Question 5 - Chapter 9 Group</TabTitle>
              <TabClose aria-label="Close tab"><Cross /></TabClose>
            </BrowserTab>
            <HeroTab title="Course Hero" />
            <HeroTab title="Course Hero" />
            <HeroTab title="Course Hero" />
            <HeroTab title="Course Hero" />
            <HeroTab title="Homework Help - Q&A from" fade />
            <NewTab aria-label="New tab">
              <svg width="26" height="26" viewBox="0 0 26 26" stroke="#fff" strokeWidth="3.500"><path d="M13 1v24M1 13h24" /></svg>
            </NewTab>
            <TabSearch aria-label="Search tabs">
              <svg width="20" height="28" viewBox="0 0 20 28" fill="none" stroke="#fff" strokeWidth="3"><path d="m2 10 8 8 8-8" /></svg>
            </TabSearch>
          </TabStrip>
          <Toolbar>
            <NavButtons>
              <NavButton aria-label="Back"><MdArrowBack size={38} /></NavButton>
              <NavButton aria-label="Forward" $dim><MdArrowForward size={38} /></NavButton>
              <NavButton aria-label="Reload"><MdRefresh size={40} /></NavButton>
            </NavButtons>
            <Omnibox>
              <MdLock size={24} color="#9aa0a6" />
              <UrlInput
                aria-label="Address"
                readOnly
                value="ezto.mheducation.com/ext/map/index.html?_con=con&external_browser=0&launchUrl=https%253A%252F%252Fnewconnect.mheducation.com%2..."
              />
              <OmniActions>
                <MdVpnKey size={30} />
                <IoShareOutline size={31} />
                <MdStarBorder size={36} />
              </OmniActions>
            </Omnibox>
            <BrowserActions>
              <MdExtension size={34} />
              <svg width="40" height="28" viewBox="-12 0 40 28"><path d="M0 0h28v28H0Zm4 4v20h14V4Z" fill="#f1f3f6" fillRule="evenodd" /></svg>
              <ProfileChip><Avatar>B</Avatar>Paused</ProfileChip>
              <svg width="28" height="28" viewBox="0 0 28 28" fill="#fff"><circle cx="14" cy="3" r="3" /><circle cx="14" cy="14" r="3" /><circle cx="14" cy="25" r="3" /></svg>
            </BrowserActions>
          </Toolbar>
          <Bookmarks>
            <Bookmark href="#"><D2L>D<i>2</i>L</D2L>Homepage - Pima...</Bookmark>
            <Bookmark href="#"><SmallLogo><span>Mc</span><span>Graw</span><span>Hill</span></SmallLogo>Class ACC 212 Ma...</Bookmark>
            <Bookmark href="#"><PimaIcon />Pima Community...</Bookmark>
            <Bookmark href="#"><GmailIcon />Inbox (6) - bburns...</Bookmark>
            <Bookmark href="#"><PimaIcon />Pima Community...</Bookmark>
          </Bookmarks>
        </BrowserChrome>

        <PageHeader>
          <Title>Chapter 9 Group Exercises <InfoIcon /></Title>
          <SavedPill>Saved</SavedPill>
          <HeaderActions>
            <HeaderAction>Help</HeaderAction>
            <HeaderAction>Save &amp; Exit</HeaderAction>
            <HeaderAction $primary>Submit</HeaderAction>
          </HeaderActions>
        </PageHeader>

        <Main>
          <Sidebar>
            <QuestionNumber>5</QuestionNumber>
            <Points><b>2</b>points</Points>
            <Timer><Hourglass />01:59:18</Timer>
            <SideLinks>
              <a href="#">eBook</a>
              <a href="#">Print</a>
              <a href="#">References</a>
            </SideLinks>
          </Sidebar>

          <Content>
            <Facts>
              <tbody>
                {facts.map(([label, value]) => (
                  <tr key={label}><td>{label}</td><td>{value}</td></tr>
                ))}
              </tbody>
            </Facts>
            <Required>Required:</Required>
            <Steps>
              <li>Calculate the direct materials price, quantity, and total spending variances for Barley Hopp.</li>
              <li>Calculate the direct labor rate, efficiency, and total spending variances for Barley Hopp.</li>
              <li>Calculate the variable overhead rate, efficiency, and total spending variances for Barley Hopp.</li>
            </Steps>

            <Worksheet>
              <Banner>Complete this question by entering your answers in the tabs below.</Banner>
              <Tabs role="tablist">
                <Tab role="tab">Required 1</Tab>
                <Tab role="tab" aria-selected $active>Required 2</Tab>
                <Tab role="tab">Required 3</Tab>
              </Tabs>
              <Instructions>
                <p>
                  Calculate the direct labor rate, efficiency, and total spending variances for Barley Hopp.
                  <br />
                  <Note>
                    Note: Do not round your intermediate calculations. Enter the dollar value of the variance as an absolute value (positive
                    number) and then use the drop-down menu to indicate the effect of each variance by selecting "F" for favorable, "U" for
                    unfavorable, and "None" for no effect (i.e., zero variance).
                  </Note>
                </p>
                <ShowLess>
                  Show less
                  <svg width="18" height="16" viewBox="0 0 18 16"><path d="M9 0 18 16H0Z" fill={navy} /></svg>
                </ShowLess>
              </Instructions>
              <AnswerTable>
                <tbody>
                  {answers.map((label) => (
                    <tr key={label}>
                      <th scope="row">{label}</th>
                      <AnswerCell $width={208}><AmountInput aria-label={`${label} amount`} /></AnswerCell>
                      <AnswerCell $width={146}>
                        <EffectSelect aria-label={`${label} effect`} defaultValue="">
                          <option value=""></option>
                          <option>F</option>
                          <option>U</option>
                          <option>None</option>
                        </EffectSelect>
                      </AnswerCell>
                    </tr>
                  ))}
                </tbody>
              </AnswerTable>
              <StepButtons>
                <StepButton><Chevron dir="l" color="#fff" w={2.500} />Required 1</StepButton>
                <StepButton>Required 3<Chevron dir="r" color="#fff" w={2.500} /></StepButton>
              </StepButtons>
            </Worksheet>
          </Content>

          <CheckWrap>
            <CheckButton>Check my work</CheckButton>
            <CheckBadge>1</CheckBadge>
          </CheckWrap>
        </Main>

        <PageFooter>
          <McGrawLogo>Mc<br />Graw<br />Hill</McGrawLogo>
          <Pager>
            <PagerCell>
              <PagerLink><Chevron dir="l" color={blue} w={4.500} size={26} /><span>Prev</span></PagerLink>
            </PagerCell>
            <PagerCell $wide>
              <PageCount><b>5</b><span>of</span><span>5</span></PageCount>
              <svg width="36" height="36" viewBox="0 0 36 36" fill={blue}>
                {[0, 13, 26].map((y) => [0, 13, 26].map((x) => <rect key={`${x}-${y}`} x={x} y={y} width="10" height="10" />))}
              </svg>
            </PagerCell>
            <PagerCell>
              <PagerLink $off><span>Next</span><Chevron dir="r" color="#c9d8ec" w={4.500} size={26} /></PagerLink>
            </PagerCell>
          </Pager>
        </PageFooter>
      </BrowserWindow>

      <DesktopFile><IoMusicalNotes size={60} /></DesktopFile>

      <DockBar aria-label="Dock">
        {apps.map((app) => <DockItem key={app.name} app={app} />)}
        <DockRule />
        {openApps.map((app) => <DockItem key={app.name} app={app} />)}
        <DockRule />
        <DockSlot aria-label="Trash">{Trash}</DockSlot>
      </DockBar>
    </Desktop>
  );
}
